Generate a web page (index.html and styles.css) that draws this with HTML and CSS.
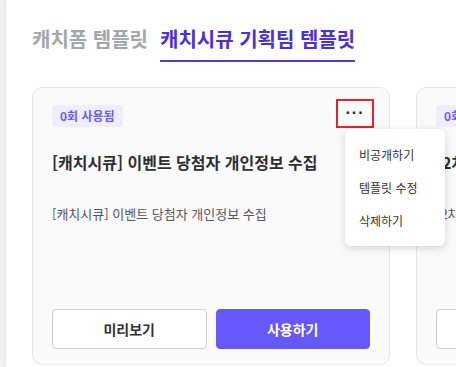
FILE: index.html
```html
<!DOCTYPE html>
<html lang="ko">
<head>
    <meta charset="UTF-8">
    <meta name="viewport" content="width=device-width, initial-scale=1.0">
    <title>템플릿</title>
    <link rel="stylesheet" href="styles.css">
</head>
<body>
    <div class="page">
        <ul class="tabs">
            <li class="tab">캐치폼 템플릿</li>
            <li class="tab active">캐치시큐 기획팀 템플릿</li>
        </ul>
        <div class="cards">
            <div class="card">
                <div class="card-head">
                    <span class="badge">0회 사용됨</span>
                    <button class="more">&middot;&middot;&middot;</button>
                </div>
                <h3 class="card-title">[캐치시큐] 이벤트 당첨자 개인정보 수집</h3>
                <p class="card-desc">[캐치시큐] 이벤트 당첨자 개인정보 수집</p>
                <div class="card-btns">
                    <button class="btn line">미리보기</button>
                    <button class="btn fill">사용하기</button>
                </div>
                <ul class="menu">
                    <li>비공개하기</li>
                    <li>템플릿 수정</li>
                    <li>삭제하기</li>
                </ul>
            </div>
            <div class="card">
                <div class="card-head">
                    <span class="badge">0회 사용됨</span>
                    <button class="more">&middot;&middot;&middot;</button>
                </div>
                <h3 class="card-title">[2차] 캐치시큐 설문 조사</h3>
                <p class="card-desc">[2차] 캐치시큐 설문 조사</p>
                <div class="card-btns">
                    <button class="btn line">미리보기</button>
                    <button class="btn fill">사용하기</button>
                </div>
            </div>
        </div>
    </div>
</body>
</html>
```

FILE: styles.css
```css
body {
    margin: 0;
    background-color: #f1f1f3;
    font-family: "Noto Sans CJK KR", "Noto Sans", sans-serif;
    overflow: hidden;
}
.page {
    margin-left: 6px;
    height: 367px;
    background-color: #fff;
    box-shadow: -1px 0 3px rgba(0, 0, 0, 0.06);
    padding-left: 26px;
    overflow: hidden;
}
.tabs {
    list-style: none;
    margin: 0;
    padding: 25px 0 0 0;
    display: flex;
    gap: 12px;
}
.tab {
    font-size: 20px;
    line-height: 28px;
    font-weight: 700;
    color: #a2a6ad;
    padding-bottom: 7px;
    border-bottom: 2px solid transparent;
}
.tab.active {
    color: #4b30d6;
    border-bottom-color: #5639dc;
}
.cards {
    display: flex;
    gap: 26px;
    margin-top: 25px;
}
.card {
    flex-shrink: 0;
    width: 358px;
    height: 278px;
    box-sizing: border-box;
    background-color: #fafafa;
    border: 1px solid #e6e6ea;
    border-radius: 10px;
    padding: 17px 19px 15px;
    display: flex;
    flex-direction: column;
    position: relative;
}
.card-head {
    display: flex;
    justify-content: space-between;
    align-items: center;
    height: 22px;
}
.badge {
    background-color: #efeeff;
    color: #6b5cf3;
    font-size: 12px;
    font-weight: 700;
    line-height: 22px;
    padding: 0 8px;
    border-radius: 4px;
}
.more {
    width: 38px;
    height: 29px;
    margin-right: -4px;
    margin-top: -6px;
    border: 2px solid #e2242b;
    background: transparent;
    font-size: 16px;
    font-weight: 700;
    color: #222;
    letter-spacing: 1px;
    padding: 0;
    line-height: 20px;
}
.card-title {
    margin: 23px 0 0;
    font-size: 16px;
    line-height: 24px;
    font-weight: 700;
    color: #2e2e33;
}
.card-desc {
    margin: 30px 0 0;
    font-size: 13px;
    line-height: 20px;
    color: #55575c;
}
.card-btns {
    margin-top: auto;
    display: flex;
    gap: 9px;
}
.btn {
    flex: 1;
    height: 40px;
    border-radius: 4px;
    font-family: "Noto Sans CJK KR", "Noto Sans", sans-serif;
    font-size: 14px;
    font-weight: 700;
}
.line {
    background-color: #fff;
    border: 1px solid #cfd0d6;
    color: #333;
}
.fill {
    background-color: #6658fa;
    border: 1px solid #6658fa;
    color: #fff;
}
.menu {
    list-style: none;
    margin: 0;
    padding: 9px 0;
    position: absolute;
    top: 41px;
    left: 312px;
    width: 100px;
    background-color: #fff;
    border-radius: 6px;
    box-shadow: 0 2px 8px rgba(0, 0, 0, 0.16);
    z-index: 10;
}
.menu li {
    font-size: 12px;
    line-height: 33px;
    padding-left: 14px;
    color: #333;
}
```
